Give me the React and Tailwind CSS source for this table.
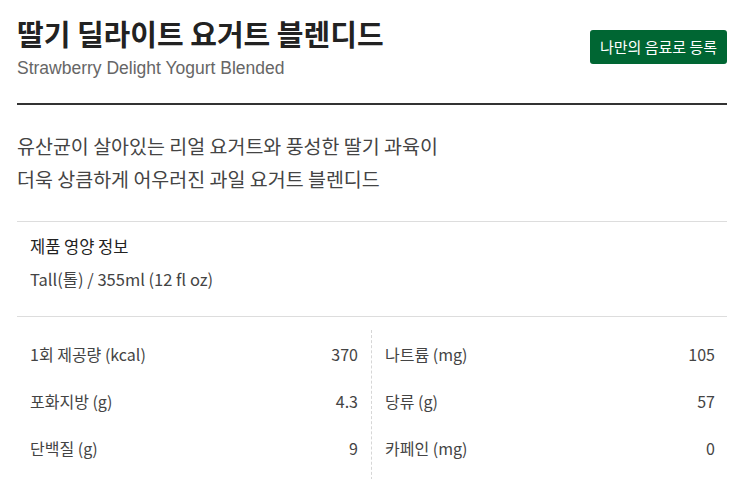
import React from "react";

const nutrition = [
  [
    { label: "1회 제공량 (kcal)", value: "370" },
    { label: "포화지방 (g)", value: "4.3" },
    { label: "단백질 (g)", value: "9" },
  ],
  [
    { label: "나트륨 (mg)", value: "105" },
    { label: "당류 (g)", value: "57" },
    { label: "카페인 (mg)", value: "0" },
  ],
];

function NutritionColumn({ items, divider }) {
  return (
    <ul className={divider ? "border-r border-dashed border-[#d6d6d6] pl-[13px] pr-[13px] pb-[14px]" : "pl-[13px] pr-[12px] pb-[14px]"}>
      {items.map((item) => (
        <li key={item.label} className="flex h-[47px] items-center justify-between text-[16px] text-[#444]">
          <span>{item.label}</span>
          <span>{item.value}</span>
        </li>
      ))}
    </ul>
  );
}

export default function App() {
  return (
    <div className="w-[742px] bg-white pl-[17px] pr-[15px] pt-[15px] font-['Noto_Sans_CJK_KR',sans-serif]">
      {/* Title */}
      <div className="flex items-start justify-between">
        <div>
          <h1 className="text-[29px] font-bold leading-[36px] text-[#222]">
            딸기 딜라이트 요거트 블렌디드
          </h1>
          <p className="mt-[7px] font-['Liberation_Sans',sans-serif] text-[17.5px] leading-[20px] text-[#666]">
            Strawberry Delight Yogurt Blended
          </p>
        </div>
        <button className="mt-[15px] flex h-[34px] w-[137px] items-center justify-center rounded-[3px] bg-[#006633] text-[15px] text-white">
          나만의 음료로 등록
        </button>
      </div>

      <div className="mt-[25px] border-t-2 border-[#333]"></div>

      {/* Description */}
      <p className="pt-[24px] pb-[26px] text-[19.5px] leading-[33px] text-[#444]">
        유산균이 살아있는 리얼 요거트와 풍성한 딸기 과육이
        <br />
        더욱 상큼하게 어우러진 과일 요거트 블렌디드
      </p>

      {/* Nutrition */}
      <div className="border-t border-[#ddd] pl-[13px] pt-[13px] pb-[26px]">
        <h2 className="text-[16.5px] leading-[22px] text-[#222]">제품 영양 정보</h2>
        <p className="mt-[11px] text-[16.5px] leading-[22px] text-[#444]">Tall(톨) / 355ml (12 fl oz)</p>
      </div>

      <div className="border-t border-[#ddd] pt-[13px]">
        <div className="grid grid-cols-2">
          <NutritionColumn items={nutrition[0]} divider />
          <NutritionColumn items={nutrition[1]} />
        </div>
      </div>
    </div>
  );
}
